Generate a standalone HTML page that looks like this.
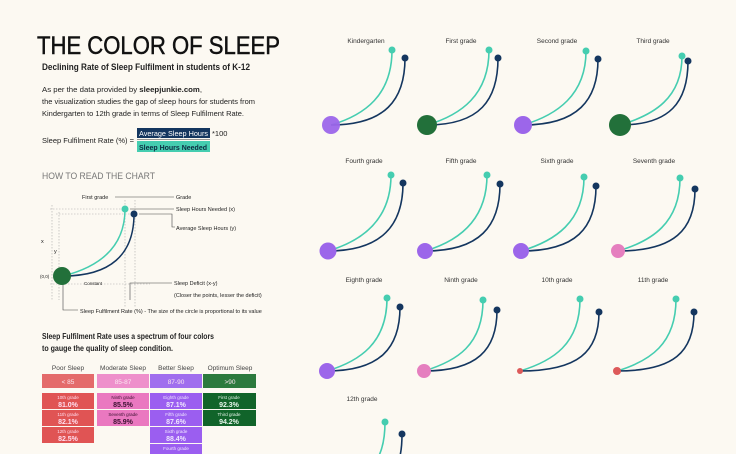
<!DOCTYPE html>
<html><head><meta charset="utf-8"><style>
html,body{margin:0;padding:0;background:#fcf9f2;}
svg{display:block;font-family:"Liberation Sans",sans-serif;}
</style></head><body>
<svg width="736" height="454" viewBox="0 0 736 454" xmlns="http://www.w3.org/2000/svg">
<rect width="736" height="454" fill="#fcf9f2"/>
<text x="37" y="54" font-size="25" fill="#111" textLength="243" lengthAdjust="spacingAndGlyphs" stroke="#111" stroke-width="0.5">THE COLOR OF SLEEP</text>
<text x="42" y="70" font-size="9.5" fill="#222" font-weight="bold" textLength="208" lengthAdjust="spacingAndGlyphs">Declining Rate of Sleep Fulfilment in students of K-12</text>
<g font-size="7.5" fill="#222">
<text x="42" y="92" textLength="160" lengthAdjust="spacingAndGlyphs">As per the data provided by <tspan font-weight="bold">sleepjunkie.com</tspan>,</text>
<text x="42" y="104" textLength="213" lengthAdjust="spacingAndGlyphs">the visualization studies the gap of sleep hours for students from</text>
<text x="42" y="116" textLength="202" lengthAdjust="spacingAndGlyphs">Kindergarten to 12th grade in terms of Sleep Fulfilment Rate.</text>
<text x="42" y="143" textLength="92" lengthAdjust="spacingAndGlyphs">Sleep Fulfilment Rate (%) =</text>
</g>
<rect x="137" y="128" width="73" height="10" fill="#14365f"/>
<text x="139" y="136" font-size="7.5" fill="#fff" textLength="69" lengthAdjust="spacingAndGlyphs">Average Sleep Hours</text>
<line x1="137" y1="139.5" x2="210" y2="139.5" stroke="#333" stroke-width="0.6"/>
<rect x="137" y="141" width="73" height="11" fill="#45cdb0"/>
<text x="139" y="150" font-size="7.5" fill="#0c2a40" font-weight="bold" textLength="68" lengthAdjust="spacingAndGlyphs">Sleep Hours Needed</text>
<text x="212" y="136" font-size="7.5" fill="#222">*100</text>
<text x="42" y="179" font-size="9" fill="#777" textLength="113" lengthAdjust="spacingAndGlyphs">HOW TO READ THE CHART</text>

<g stroke="#aaa" stroke-width="0.6" stroke-dasharray="1.5,1.5" fill="none">
<line x1="50" y1="209" x2="125" y2="209"/>
<line x1="56" y1="214" x2="134" y2="214"/>
<line x1="52" y1="205" x2="52" y2="300"/>
<line x1="59" y1="212" x2="59" y2="300"/>
<line x1="125" y1="200" x2="125" y2="307"/>
<line x1="135" y1="200" x2="135" y2="307"/>
<line x1="50" y1="284" x2="150" y2="284"/>
</g>
<g stroke="#444" stroke-width="0.6" fill="none">
<line x1="115" y1="197" x2="174" y2="197"/>
<line x1="130" y1="209" x2="174" y2="209"/>
<polyline points="139,214 172,214 172,227 175,227"/>
<polyline points="130,300 130,283 172,283"/>
<polyline points="63,285 63,310 78,310"/>
</g>
<path d="M63,276 C95,268 125,250 125,209" stroke="#45cdb0" stroke-width="1.5" fill="none"/>
<path d="M63,276 C110,276 134,255 134,214" stroke="#14365f" stroke-width="1.5" fill="none"/>
<circle cx="62" cy="276" r="9" fill="#22703a"/>
<circle cx="125" cy="209" r="3.5" fill="#45cdb0"/>
<circle cx="134" cy="214" r="3.5" fill="#14365f"/>
<g font-size="5.5" fill="#222">
<text x="82" y="199">First grade</text>
<text x="176" y="199">Grade</text>
<text x="176" y="211">Sleep Hours Needed (x)</text>
<text x="176" y="230">Average Sleep Hours (y)</text>
<text x="174" y="285">Sleep Deficit (x-y)</text>
<text x="174" y="297">(Closer the points, lesser the deficit)</text>
<text x="80" y="313">Sleep Fulfilment Rate (%) - The size of the circle is proportional to its value</text>
<text x="40" y="278" font-size="4.5">(0,0)</text>
<text x="84" y="285" font-size="4.5">Constant</text>
<text x="41" y="243">x</text>
<text x="54" y="253">y</text>
</g>

<g font-size="8" fill="#222" font-weight="bold">
<text x="42" y="339" textLength="172" lengthAdjust="spacingAndGlyphs">Sleep Fulfilment Rate uses a spectrum of four colors</text>
<text x="42" y="351" textLength="131" lengthAdjust="spacingAndGlyphs">to gauge the quality of sleep condition.</text>
</g>
<g font-size="6.5" fill="#444" text-anchor="middle">
<text x="68" y="370">Poor Sleep</text>
<text x="123" y="370">Moderate Sleep</text>
<text x="176" y="370">Better Sleep</text>
<text x="230" y="370">Optimum Sleep</text>
</g>
<rect x="42" y="374" width="52" height="14" fill="#e46b6b"/>
<rect x="97" y="374" width="52" height="14" fill="#ee8fcb"/>
<rect x="150" y="374" width="52" height="14" fill="#a06eee"/>
<rect x="203" y="374" width="53" height="14" fill="#2c7a3e"/>
<g font-size="6.5" fill="#fbe6f0" text-anchor="middle">
<text x="68" y="384">&lt; 85</text>
<text x="123" y="384">85-87</text>
<text x="176" y="384">87-90</text>
<text x="230" y="384">&gt;90</text>
</g>
<g>
<rect x="42" y="393" width="52" height="16" fill="#e05454"/>
<rect x="42" y="410" width="52" height="16" fill="#e05454"/>
<rect x="42" y="427" width="52" height="16" fill="#e05454"/>
<rect x="97" y="393" width="52" height="16" fill="#ea78c0"/>
<rect x="97" y="410" width="52" height="16" fill="#ea78c0"/>
<rect x="150" y="393" width="52" height="16" fill="#9b5ef0"/>
<rect x="150" y="410" width="52" height="16" fill="#9b5ef0"/>
<rect x="150" y="427" width="52" height="16" fill="#9b5ef0"/>
<rect x="150" y="444" width="52" height="16" fill="#9b5ef0"/>
<rect x="203" y="393" width="53" height="16" fill="#11642a"/>
<rect x="203" y="410" width="53" height="16" fill="#11642a"/>
</g>
<g text-anchor="middle" fill="#fde">
<g font-size="4.5"><text x="68" y="399">10th grade</text><text x="68" y="416">11th grade</text><text x="68" y="433">12th grade</text></g>
<g font-size="7" font-weight="bold"><text x="68" y="407">81.0%</text><text x="68" y="424">82.1%</text><text x="68" y="441">82.5%</text></g>
</g>
<g text-anchor="middle" fill="#3a1030">
<g font-size="4.5"><text x="123" y="399">Ninth grade</text><text x="123" y="416">Seventh grade</text></g>
<g font-size="7" font-weight="bold"><text x="123" y="407">85.5%</text><text x="123" y="424">85.9%</text></g>
</g>
<g text-anchor="middle" fill="#efe6ff">
<g font-size="4.5"><text x="176" y="399">Eighth grade</text><text x="176" y="416">Fifth grade</text><text x="176" y="433">Sixth grade</text><text x="176" y="450">Fourth grade</text></g>
<g font-size="7" font-weight="bold"><text x="176" y="407">87.1%</text><text x="176" y="424">87.6%</text><text x="176" y="441">88.4%</text></g>
</g>
<g text-anchor="middle" fill="#e6f5ea">
<g font-size="4.5"><text x="229" y="399">First grade</text><text x="229" y="416">Third grade</text></g>
<g font-size="7" font-weight="bold"><text x="229" y="407">92.3%</text><text x="229" y="424">94.2%</text></g>
</g>

<g font-size="6.5" fill="#333" text-anchor="middle">
<text x="366" y="43">Kindergarten</text><text x="461" y="43">First grade</text><text x="557" y="43">Second grade</text><text x="653" y="43">Third grade</text>
<text x="364" y="163">Fourth grade</text><text x="461" y="163">Fifth grade</text><text x="557" y="163">Sixth grade</text><text x="654" y="163">Seventh grade</text>
<text x="364" y="282">Eighth grade</text><text x="461" y="282">Ninth grade</text><text x="557" y="282">10th grade</text><text x="653" y="282">11th grade</text>
<text x="362" y="401">12th grade</text>
</g>
<g fill="none" stroke-width="1.6">
<path d="M331,125 C365,115 392,95 392,50" stroke="#45cdb0"/><path d="M331,125 C385,125 405,100 405,58" stroke="#14365f"/>
<path d="M427,125 C461,115 489,95 489,50" stroke="#45cdb0"/><path d="M427,125 C480,125 498,100 498,58" stroke="#14365f"/>
<path d="M523,125 C557,115 586,95 586,51" stroke="#45cdb0"/><path d="M523,125 C578,125 598,100 598,59" stroke="#14365f"/>
<path d="M620,125 C654,115 682,98 682,56" stroke="#45cdb0"/><path d="M620,125 C670,125 688,102 688,61" stroke="#14365f"/>

<path d="M328,251 C362,241 391,220 391,175" stroke="#45cdb0"/><path d="M328,251 C382,251 403,225 403,183" stroke="#14365f"/>
<path d="M425,251 C459,241 487,220 487,175" stroke="#45cdb0"/><path d="M425,251 C480,251 500,226 500,184" stroke="#14365f"/>
<path d="M521,251 C555,241 584,222 584,177" stroke="#45cdb0"/><path d="M521,251 C576,251 596,228 596,186" stroke="#14365f"/>
<path d="M618,251 C652,241 680,223 680,178" stroke="#45cdb0"/><path d="M618,251 C674,251 695,230 695,189" stroke="#14365f"/>

<path d="M327,371 C360,361 387,343 387,298" stroke="#45cdb0"/><path d="M327,371 C380,371 400,348 400,307" stroke="#14365f"/>
<path d="M424,371 C457,361 483,345 483,300" stroke="#45cdb0"/><path d="M424,371 C477,371 497,350 497,310" stroke="#14365f"/>
<path d="M520,371 C553,361 580,344 580,299" stroke="#45cdb0"/><path d="M520,371 C578,371 599,352 599,312" stroke="#14365f"/>
<path d="M617,371 C650,361 676,344 676,299" stroke="#45cdb0"/><path d="M617,371 C674,371 694,352 694,312" stroke="#14365f"/>

<path d="M372,470 C380,455 385,445 385,422" stroke="#45cdb0"/><path d="M395,470 C400,460 402,450 402,434" stroke="#14365f"/>
</g>
<g>
<circle cx="331" cy="125" r="9" fill="#9c66ea" fill-opacity="0.95"/><circle cx="392" cy="50" r="3.5" fill="#45cdb0"/><circle cx="405" cy="58" r="3.5" fill="#14365f"/>
<circle cx="427" cy="125" r="10" fill="#22703a"/><circle cx="489" cy="50" r="3.5" fill="#45cdb0"/><circle cx="498" cy="58" r="3.5" fill="#14365f"/>
<circle cx="523" cy="125" r="9" fill="#9c66ea"/><circle cx="586" cy="51" r="3.5" fill="#45cdb0"/><circle cx="598" cy="59" r="3.5" fill="#14365f"/>
<circle cx="620" cy="125" r="11" fill="#22703a"/><circle cx="682" cy="56" r="3.5" fill="#45cdb0"/><circle cx="688" cy="61" r="3.5" fill="#14365f"/>

<circle cx="328" cy="251" r="8.5" fill="#9c66ea"/><circle cx="391" cy="175" r="3.5" fill="#45cdb0"/><circle cx="403" cy="183" r="3.5" fill="#14365f"/>
<circle cx="425" cy="251" r="8" fill="#9c66ea"/><circle cx="487" cy="175" r="3.5" fill="#45cdb0"/><circle cx="500" cy="184" r="3.5" fill="#14365f"/>
<circle cx="521" cy="251" r="8" fill="#9c66ea"/><circle cx="584" cy="177" r="3.5" fill="#45cdb0"/><circle cx="596" cy="186" r="3.5" fill="#14365f"/>
<circle cx="618" cy="251" r="7" fill="#e57fbf"/><circle cx="680" cy="178" r="3.5" fill="#45cdb0"/><circle cx="695" cy="189" r="3.5" fill="#14365f"/>

<circle cx="327" cy="371" r="8" fill="#9c66ea"/><circle cx="387" cy="298" r="3.5" fill="#45cdb0"/><circle cx="400" cy="307" r="3.5" fill="#14365f"/>
<circle cx="424" cy="371" r="7" fill="#e57fbf"/><circle cx="483" cy="300" r="3.5" fill="#45cdb0"/><circle cx="497" cy="310" r="3.5" fill="#14365f"/>
<circle cx="520" cy="371" r="3" fill="#dd5a5a"/><circle cx="580" cy="299" r="3.5" fill="#45cdb0"/><circle cx="599" cy="312" r="3.5" fill="#14365f"/>
<circle cx="617" cy="371" r="4" fill="#dd5a5a"/><circle cx="676" cy="299" r="3.5" fill="#45cdb0"/><circle cx="694" cy="312" r="3.5" fill="#14365f"/>

<circle cx="385" cy="422" r="3.5" fill="#45cdb0"/><circle cx="402" cy="434" r="3.5" fill="#14365f"/>
</g>
</svg>
</body></html>
